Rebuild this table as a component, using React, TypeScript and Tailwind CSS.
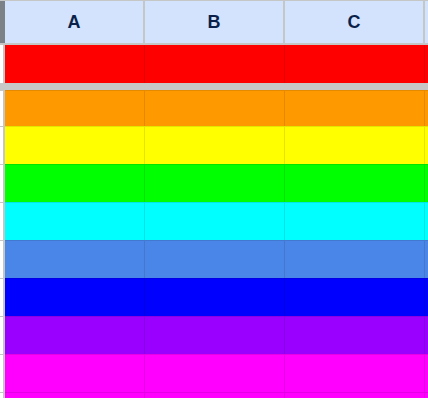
const rows = [
  "bg-[#ff9900]",
  "bg-[#ffff00]",
  "bg-[#00ff00]",
  "bg-[#00ffff]",
  "bg-[#4a86e8]",
  "bg-[#0000ff]",
  "bg-[#9900ff]",
  "bg-[#ff00ff]",
  "bg-[#ff00ff]",
];

function Cells({ color, top }: { color: string; top?: boolean }) {
  const line = top ? "border-t" : "";
  return (
    <>
      <div className={`w-[140px] shrink-0 border-r border-black/10 ${line} ${color}`} />
      <div className={`w-[140px] shrink-0 border-r border-black/10 ${line} ${color}`} />
      <div className={`w-[140px] shrink-0 border-r border-black/10 ${line} ${color}`} />
      <div className={`flex-1 border-black/10 ${line} ${color}`} />
    </>
  );
}

export default function App() {
  return (
    <div className="w-[428px] h-[398px] overflow-hidden bg-white flex flex-col font-['Liberation_Sans',Arial,sans-serif]">
      {/* column headers */}
      <div className="flex h-[45px] shrink-0 border-t border-b-2 border-[#c4c7c5] bg-[#d3e3fd]">
        <div className="w-[5px] shrink-0 bg-[#7c8087]" />
        {["A", "B", "C"].map((c) => (
          <div
            key={c}
            className="w-[140px] shrink-0 border-r-2 border-[#c4c7c5] flex items-center justify-center text-[18px] font-bold text-[#0b1f4b]"
          >
            {c}
          </div>
        ))}
        <div className="flex-1" />
      </div>

      {/* frozen row */}
      <div className="flex h-[38px] shrink-0">
        <div className="w-[5px] shrink-0 bg-white border-r-2 border-[#c4c7c5]" />
        <Cells color="bg-[#ff0000]" />
      </div>
      <div className="h-[7px] shrink-0 bg-[#c7c7c7]" />

      {rows.map((color, i) => (
        <div key={i} className={`flex shrink-0 ${i === 0 ? "h-[36px]" : "h-[38px]"}`}>
          <div className="w-[5px] shrink-0 bg-white border-r-2 border-t border-[#c4c7c5]" />
          <Cells color={color} top />
        </div>
      ))}
    </div>
  );
}
